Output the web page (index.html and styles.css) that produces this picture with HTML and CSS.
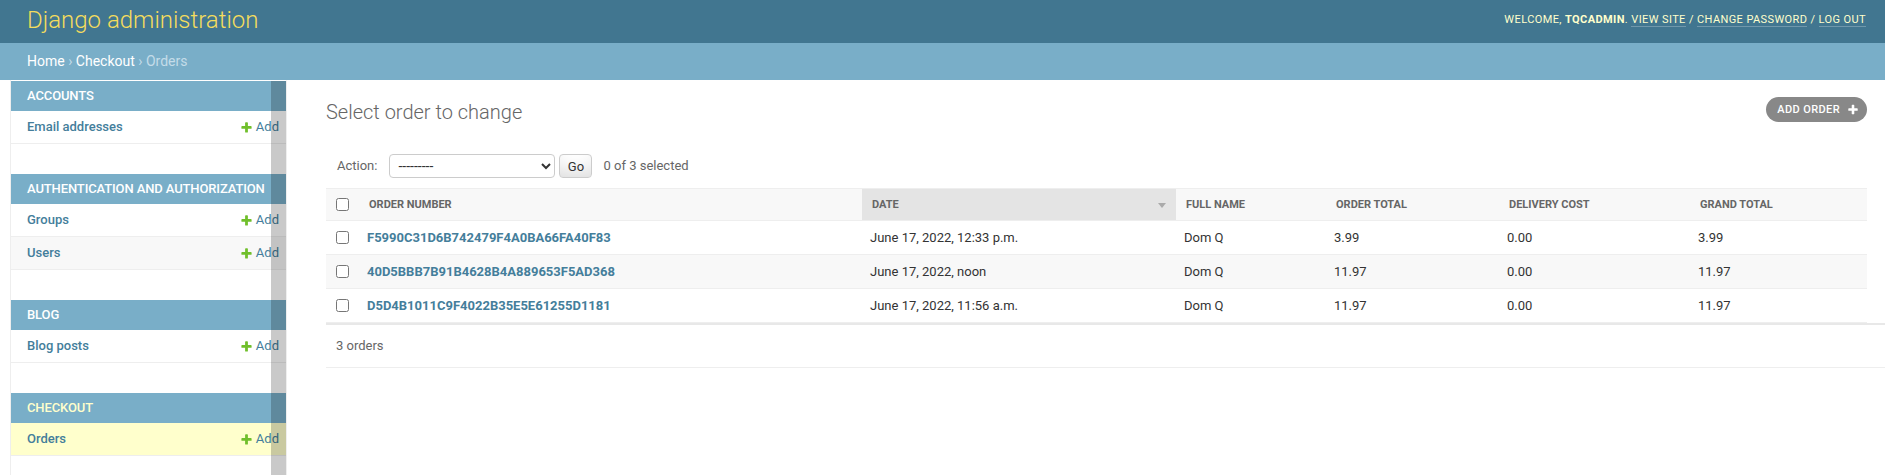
FILE: index.html
```html
<!DOCTYPE html>
<html lang="en">
<head>
<meta charset="utf-8">
<title>Select order to change | Django site admin</title>
<link rel="stylesheet" href="styles.css">
</head>
<body>
<div class="page">
  <header class="header">
    <h1 class="site-name"><a href="#">Django administration</a></h1>
    <div class="user-tools">Welcome, <strong>tqcadmin</strong>. <a href="#">View site</a> / <a href="#">Change password</a> / <a href="#">Log out</a></div>
  </header>
  <nav class="breadcrumbs"><a href="#">Home</a> › <a href="#">Checkout</a> › Orders</nav>
  <div class="main">
    <div class="toggle"></div>
    <aside class="sidebar">
      <div class="module">
        <div class="caption">Accounts</div>
        <div class="row"><a class="model" href="#">Email addresses</a><a class="addlink" href="#"><svg class="plus" width="13" height="13" viewBox="0 0 1792 1792"><path fill="#70bf2b" d="M1600 796v192q0 40-28 68t-68 28h-416v416q0 40-28 68t-68 28h-192q-40 0-68-28t-28-68v-416h-416q-40 0-68-28t-28-68v-192q0-40 28-68t68-28h416v-416q0-40 28-68t68-28h192q40 0 68 28t28 68v416h416q40 0 68 28t28 68z"/></svg>Add</a></div>
      </div>
      <div class="module">
        <div class="caption">Authentication and Authorization</div>
        <div class="row"><a class="model" href="#">Groups</a><a class="addlink" href="#"><svg class="plus" width="13" height="13" viewBox="0 0 1792 1792"><path fill="#70bf2b" d="M1600 796v192q0 40-28 68t-68 28h-416v416q0 40-28 68t-68 28h-192q-40 0-68-28t-28-68v-416h-416q-40 0-68-28t-28-68v-192q0-40 28-68t68-28h416v-416q0-40 28-68t68-28h192q40 0 68 28t28 68v416h416q40 0 68 28t28 68z"/></svg>Add</a></div>
        <div class="row alt"><a class="model" href="#">Users</a><a class="addlink" href="#"><svg class="plus" width="13" height="13" viewBox="0 0 1792 1792"><path fill="#70bf2b" d="M1600 796v192q0 40-28 68t-68 28h-416v416q0 40-28 68t-68 28h-192q-40 0-68-28t-28-68v-416h-416q-40 0-68-28t-28-68v-192q0-40 28-68t68-28h416v-416q0-40 28-68t68-28h192q40 0 68 28t28 68v416h416q40 0 68 28t28 68z"/></svg>Add</a></div>
      </div>
      <div class="module">
        <div class="caption">Blog</div>
        <div class="row"><a class="model" href="#">Blog posts</a><a class="addlink" href="#"><svg class="plus" width="13" height="13" viewBox="0 0 1792 1792"><path fill="#70bf2b" d="M1600 796v192q0 40-28 68t-68 28h-416v416q0 40-28 68t-68 28h-192q-40 0-68-28t-28-68v-416h-416q-40 0-68-28t-28-68v-192q0-40 28-68t68-28h416v-416q0-40 28-68t68-28h192q40 0 68 28t28 68v416h416q40 0 68 28t28 68z"/></svg>Add</a></div>
      </div>
      <div class="module">
        <div class="caption current-app">Checkout</div>
        <div class="row current-model"><a class="model" href="#">Orders</a><a class="addlink" href="#"><svg class="plus" width="13" height="13" viewBox="0 0 1792 1792"><path fill="#70bf2b" d="M1600 796v192q0 40-28 68t-68 28h-416v416q0 40-28 68t-68 28h-192q-40 0-68-28t-28-68v-416h-416q-40 0-68-28t-28-68v-192q0-40 28-68t68-28h416v-416q0-40 28-68t68-28h192q40 0 68 28t28 68v416h416q40 0 68 28t28 68z"/></svg>Add</a></div>
      </div>
      <div class="scrollbar"></div>
    </aside>
    <main class="content">
      <div class="content-head">
        <h1 class="page-title">Select order to change</h1>
        <a class="object-add" href="#">Add order<svg width="12" height="12" viewBox="0 0 1792 1792"><path fill="#fff" d="M1600 736v192q0 40-28 68t-68 28h-416v416q0 40-28 68t-68 28h-192q-40 0-68-28t-28-68v-416h-416q-40 0-68-28t-28-68v-192q0-40 28-68t68-28h416v-416q0-40 28-68t68-28h192q40 0 68 28t28 68v416h416q40 0 68 28t28 68z"/></svg></a>
      </div>
      <div class="actions">
        <label class="action-label">Action:</label>
        <select class="action-select"><option>---------</option></select>
        <button class="go" type="button">Go</button>
        <span class="counter">0 of 3 selected</span>
      </div>
      <table class="results">
        <colgroup>
          <col class="c-cb"><col class="c-num"><col class="c-date"><col class="c-name"><col class="c-total"><col class="c-del"><col class="c-grand">
        </colgroup>
        <thead>
          <tr>
            <th class="cb"><input type="checkbox"></th>
            <th>Order number</th>
            <th class="sorted">Date<span class="sortoptions"><svg width="8" height="5" viewBox="0 0 8 5"><path d="M0 0h8L4 5z" fill="#aaa"/></svg></span></th>
            <th>Full name</th>
            <th>Order total</th>
            <th>Delivery cost</th>
            <th>Grand total</th>
          </tr>
        </thead>
        <tbody>
          <tr>
            <td class="cb"><input type="checkbox"></td>
            <td><a class="num" href="#">F5990C31D6B742479F4A0BA66FA40F83</a></td>
            <td>June 17, 2022, 12:33 p.m.</td>
            <td>Dom Q</td>
            <td>3.99</td>
            <td>0.00</td>
            <td>3.99</td>
          </tr>
          <tr class="alt">
            <td class="cb"><input type="checkbox"></td>
            <td><a class="num" href="#">40D5BBB7B91B4628B4A889653F5AD368</a></td>
            <td>June 17, 2022, noon</td>
            <td>Dom Q</td>
            <td>11.97</td>
            <td>0.00</td>
            <td>11.97</td>
          </tr>
          <tr>
            <td class="cb"><input type="checkbox"></td>
            <td><a class="num" href="#">D5D4B1011C9F4022B35E5E61255D1181</a></td>
            <td>June 17, 2022, 11:56 a.m.</td>
            <td>Dom Q</td>
            <td>11.97</td>
            <td>0.00</td>
            <td>11.97</td>
          </tr>
        </tbody>
      </table>
      <p class="paginator">3 orders</p>
    </main>
  </div>
</div>
</body>
</html>
```
FILE: styles.css
```css
* { box-sizing: border-box; }
html, body { margin: 0; padding: 0; }
body {
  font-family: Roboto, "Liberation Sans", Arial, sans-serif;
  font-size: 14px;
  color: #333;
  background: #fff;
}
a { color: #447e9b; text-decoration: none; }

.page { display: flex; flex-direction: column; min-height: 100vh; }

/* Header */
.header {
  display: flex;
  justify-content: space-between;
  align-items: center;
  height: 43px;
  padding: 0 19px 4px 27px;
  background: #417690;
  color: #ffc;
}
.site-name { margin: 0; font-size: 24px; font-weight: 300; line-height: 28px; }
.site-name a { color: #f5dd5d; }
.user-tools {
  font-size: 11px;
  letter-spacing: 0.4px;
  text-transform: uppercase;
  line-height: 14px;
}
.user-tools strong { font-weight: 700; color: #ffc; }
.user-tools a { color: #ffc; border-bottom: 1px solid rgba(255,255,255,0.25); }

/* Breadcrumbs */
.breadcrumbs {
  background: #79aec8;
  color: #c4dce8;
  padding: 10px 27px;
  font-size: 14px;
  line-height: 17px;
}
.breadcrumbs a { color: #fff; }

/* Main */
.main { display: flex; flex: 1; }
.toggle { flex: 0 0 11px; border-right: 1px solid #eee; }

.sidebar {
  position: relative;
  flex: 0 0 276px;
  border-top: 1px solid transparent;
  border-right: 1px solid #eee;
  overflow: hidden;
}
.module { margin-bottom: 30px; }
.caption {
  background: #79aec8;
  color: #fff;
  padding: 8px 16px;
  font-size: 13px;
  line-height: 14px;
  font-weight: 500;
  letter-spacing: -0.12px;
  text-transform: uppercase;
  white-space: nowrap;
}
.caption.current-app { color: #ffc; }
.row {
  display: flex;
  justify-content: space-between;
  align-items: center;
  padding: 8px 7px 8px 16px;
  font-size: 13px;
  line-height: 16px;
  border-bottom: 1px solid #eee;
}
.row.alt { background: #f8f8f8; }
.row.current-model { background: #ffc; }
.model { font-weight: 500; }
.addlink { display: inline-flex; align-items: center; }
.plus { margin-right: 3px; }
.scrollbar {
  position: absolute;
  top: 0;
  right: 0;
  bottom: 0;
  width: 15px;
  background: rgba(0,0,0,0.21);
}

/* Content */
.content { flex: 1; min-width: 0; padding: 20px 18px 0 39px; }
.content-head { display: flex; justify-content: space-between; align-items: flex-start; }
.page-title {
  margin: 0 0 20px;
  font-size: 20px;
  font-weight: 300;
  line-height: 24px;
  color: #666;
}
.object-add {
  display: inline-flex;
  align-items: center;
  gap: 7px;
  margin-top: -3px;
  height: 25px;
  padding: 0 8px 0 11px;
  border-radius: 15px;
  background: #888;
  color: #fff;
  font-size: 11px;
  font-weight: 500;
  letter-spacing: 0.4px;
  text-transform: uppercase;
}

.actions {
  display: flex;
  align-items: center;
  padding: 10px;
  height: 44px;
  font-size: 13px;
  line-height: 24px;
  color: #666;
}
.action-label { padding-left: 1px; }
.action-select {
  margin-left: 12px;
  width: 166px;
  height: 24px;
  font-family: inherit;
  font-size: 14px;
  color: #333;
  background: #fff;
  border: 1px solid #ccc;
  border-radius: 4px;
  padding: 0 0 0 4px;
}
.go {
  margin-left: 4px;
  width: 33px;
  height: 24px;
  padding: 0;
  font-family: inherit;
  font-size: 13px;
  color: #333;
  background: #fff;
  border: 1px solid #ccc;
  border-radius: 4px;
  box-shadow: 0 -15px 20px -10px rgba(0,0,0,0.15) inset;
}
.counter { margin-left: 11px; }

.results {
  width: 100%;
  border-collapse: separate;
  border-spacing: 0;
  table-layout: fixed;
  font-size: 13px;
}
.c-cb { width: 33px; }
.c-num { width: 503px; }
.c-date { width: 314px; }
.c-name { width: 150px; }
.c-total { width: 173px; }
.c-del { width: 191px; }
.c-grand { width: 177px; }

.results th, .results td { text-align: left; vertical-align: middle; }
.results thead th {
  background: #f8f8f8;
  color: #666;
  font-size: 11px;
  font-weight: 700;
  text-transform: uppercase;
  white-space: nowrap;
  line-height: 15px;
  padding: 8px 10px;
  border-top: 1px solid #eee;
  border-bottom: 1px solid #eee;
}
.results thead th.sorted { background: #e4e4e4; }
.sortoptions { float: right; display: flex; align-items: center; height: 15px; padding-top: 2px; }
.results td {
  padding: 8px;
  line-height: 17px;
  border-bottom: 1px solid #eee;
  color: #333;
}
.results tr.alt td { background: #f8f8f8; }
.results th.cb, .results td.cb { padding-left: 10px; padding-right: 10px; }
.results input[type="checkbox"] { margin: 0; vertical-align: middle; display: block; }
.num { font-weight: 700; }

.paginator {
  margin: 0 -18px 0 0;
  padding: 10px;
  font-size: 13px;
  line-height: 22px;
  color: #666;
  border-top: 2px solid #e8e8e8;
  border-bottom: 1px solid #eee;
}
```
